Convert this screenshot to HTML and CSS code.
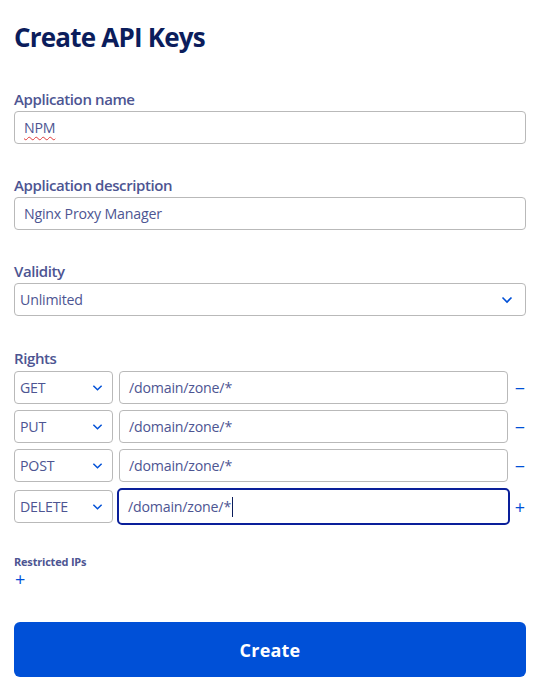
FILE: index.html
```html
<!DOCTYPE html>
<html lang="en">
<head>
<meta charset="utf-8">
<title>Create API Keys</title>
<link rel="stylesheet" href="styles.css">
</head>
<body>
<main class="page">
  <h1 class="title">Create API Keys</h1>

  <div class="field">
    <label class="label">Application name</label>
    <div class="input"><span class="spell">NPM</span></div>
  </div>

  <div class="field">
    <label class="label">Application description</label>
    <div class="input">Nginx Proxy Manager</div>
  </div>

  <div class="field">
    <label class="label">Validity</label>
    <div class="input select">Unlimited
      <svg class="chev" viewBox="0 0 12 8" width="12" height="8"><path d="M1.5 1.5 L6 6 L10.5 1.5" fill="none" stroke="currentColor" stroke-width="1.6"/></svg>
    </div>
  </div>

  <div class="field rights">
    <label class="label">Rights</label>
    <div class="right-row">
      <div class="input select method">GET<svg class="chev" viewBox="0 0 12 8" width="12" height="8"><path d="M1.5 1.5 L6 6 L10.5 1.5" fill="none" stroke="currentColor" stroke-width="1.6"/></svg></div>
      <div class="input path">/domain/zone/*</div>
      <span class="action">&minus;</span>
    </div>
    <div class="right-row">
      <div class="input select method">PUT<svg class="chev" viewBox="0 0 12 8" width="12" height="8"><path d="M1.5 1.5 L6 6 L10.5 1.5" fill="none" stroke="currentColor" stroke-width="1.6"/></svg></div>
      <div class="input path">/domain/zone/*</div>
      <span class="action">&minus;</span>
    </div>
    <div class="right-row">
      <div class="input select method">POST<svg class="chev" viewBox="0 0 12 8" width="12" height="8"><path d="M1.5 1.5 L6 6 L10.5 1.5" fill="none" stroke="currentColor" stroke-width="1.6"/></svg></div>
      <div class="input path">/domain/zone/*</div>
      <span class="action">&minus;</span>
    </div>
    <div class="right-row">
      <div class="input select method">DELETE<svg class="chev" viewBox="0 0 12 8" width="12" height="8"><path d="M1.5 1.5 L6 6 L10.5 1.5" fill="none" stroke="currentColor" stroke-width="1.6"/></svg></div>
      <div class="input path focused">/domain/zone/*<span class="caret"></span></div>
      <span class="action">+</span>
    </div>
  </div>

  <div class="field ips">
    <label class="label small">Restricted IPs</label>
    <span class="action add">+</span>
  </div>

  <button class="submit" type="button">Create</button>
</main>
</body>
</html>
```
FILE: styles.css
```css
html, body {
  margin: 0;
  padding: 0;
  background: #fff;
}

body {
  font-family: "Open Sans", "Noto Sans", sans-serif;
  color: #4d5592;
}

.page {
  padding: 0 13px 0 14px;
  display: flex;
  flex-direction: column;
}

.title {
  margin: 21px 0 0;
  font-size: 26px;
  line-height: 32px;
  font-weight: 700;
  color: #0b1d5c;
  letter-spacing: -0.8px;
}

.field {
  display: flex;
  flex-direction: column;
  margin-top: 36px;
}

.field + .field { margin-top: 31px; }

.label {
  font-size: 15px;
  line-height: 20px;
  font-weight: 600;
  color: #4d5592;
  margin-bottom: 2px;
  letter-spacing: -0.4px;
}

.input {
  box-sizing: border-box;
  height: 33px;
  border: 1px solid #b9b9b9;
  border-radius: 4px;
  padding: 0 9px;
  font-size: 14.2px;
  line-height: 31px;
  color: #4d5592;
  display: flex;
  align-items: center;
  letter-spacing: -0.2px;
}

.spell {
  text-decoration: underline wavy #e03c3c;
  text-decoration-thickness: 1px;
  text-underline-offset: 3px;
}

.select {
  justify-content: space-between;
  padding-left: 5px;
  padding-right: 12px;
}

.chev {
  color: #0050d7;
  flex: none;
}

.field.rights { margin-top: 32px; }

.rights .label { margin-bottom: 3px; }

.right-row {
  display: flex;
  align-items: center;
  gap: 6px;
  margin-bottom: 6px;
}

.method {
  width: 99px;
  flex: none;
  padding-right: 9px;
}

.method .chev { width: 11px; }

.path {
  flex: 1;
  padding-left: 9px;
}

.path.focused {
  height: 37px;
  margin: 0 -2px;
  border: 2px solid #0a1f9a;
  border-radius: 5px;
}

.caret {
  display: inline-block;
  width: 1px;
  height: 20px;
  background: #0b1d5c;
  margin-left: 1px;
}

.action {
  width: 12px;
  flex: none;
  color: #0050d7;
  font-size: 18px;
  line-height: 20px;
  text-align: center;
}

.field.ips { margin-top: 24px; }

.label.small {
  font-size: 11px;
  line-height: 14px;
  font-weight: 700;
  margin-bottom: 0;
  letter-spacing: -0.2px;
}

.add {
  margin-left: 1px;
  text-align: left;
}

.submit {
  margin-top: 33px;
  height: 55px;
  border: none;
  border-radius: 6px;
  background: #0050d7;
  color: #fff;
  font-family: inherit;
  font-size: 18px;
  font-weight: 700;
  letter-spacing: 0.2px;
}
```
